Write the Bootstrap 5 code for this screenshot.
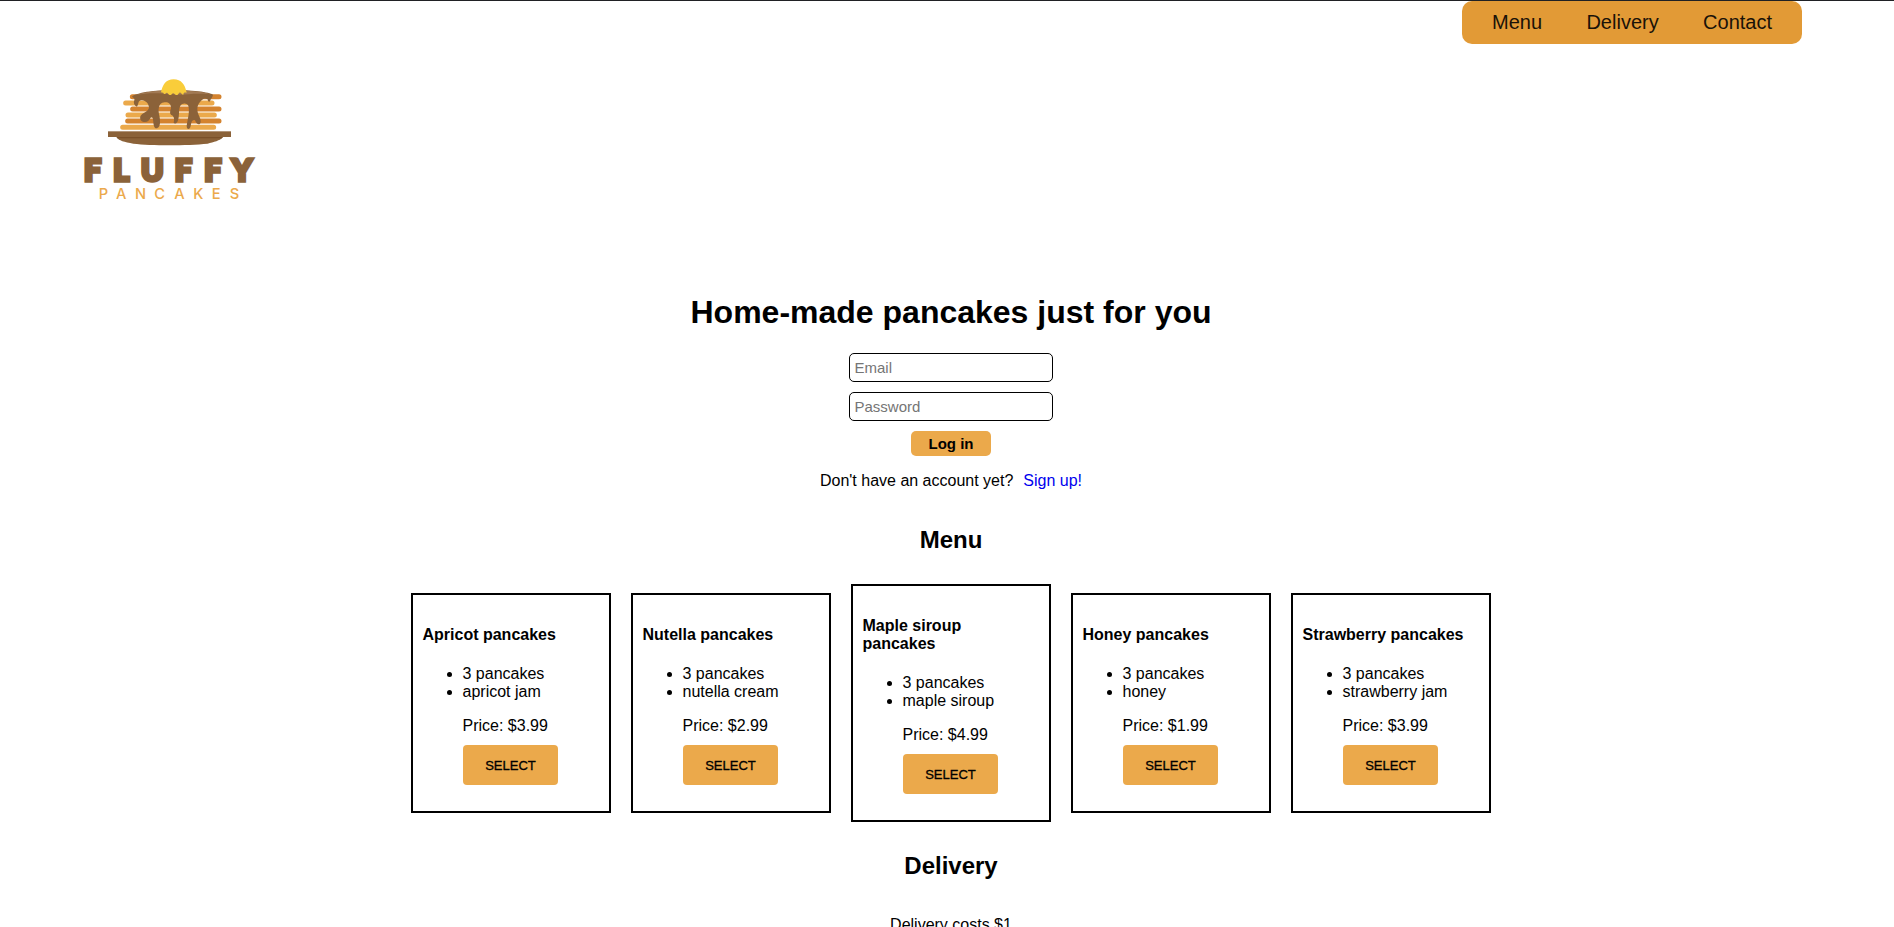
<!DOCTYPE html>
<html lang="en">
<head>
<meta charset="utf-8">
<meta name="viewport" content="width=device-width, initial-scale=1">
<title>Fluffy Pancakes</title>
<link href="https://cdn.jsdelivr.net/npm/bootstrap@5.3.0/dist/css/bootstrap.min.css" rel="stylesheet">
<style>
html{overflow:hidden}
body{font:16px/18px "Liberation Sans",Arial,sans-serif;color:#000;background:#fff;border-top:1px solid #202124;height:927px;overflow:hidden}
.site-nav{width:340px;height:43px;margin-right:92px;padding:0 30px;background:#e29a36;border-radius:10px;font-size:20px;line-height:43px}
.site-nav a{color:#1a1208;text-decoration:none}
.brand{margin:26px 0 0 70px;width:200px;height:140px}
.brand svg{display:block}
.word-top{font:900 91px Lato,sans-serif;fill:#8b6239;stroke:#8b6239;stroke-width:11px}
.word-sub{font:500 44px Inter,sans-serif;fill:#eba94b}
.page{padding-left:8px}
h1{font-size:32px;font-weight:700;line-height:37px;margin:84px 0 22px}
h2{font-size:24px;font-weight:700;line-height:27px;margin:0}
#menu{margin:36px 0 31px}
#delivery{margin:30px 0 37px}
.field{width:204px;height:29px;padding:5px 4.500px;border:1px solid #000;border-radius:5px;font-size:15px;line-height:17px;margin-bottom:10px;color:#000}
.field::placeholder{color:#757575;opacity:1}
.login{height:25px;width:80px;border:0;border-radius:5px;background:#eba94b;font-size:15px;line-height:17px;font-weight:700}
.ask{margin:16px 0 0}
.signup{color:#00e;text-decoration:none;margin-left:10px}
.menu-row{gap:20px}
.item{width:200px;border:2px solid #000;padding:10px 12px 10px 9.500px}
.item h3{font-size:16px;font-weight:700;line-height:18px;margin:21px 0}
.item ul{padding-left:40px;margin:0 0 16px}
.order{margin:0 0 16px 40px}
.pick{display:block;width:95px;height:40px;border:0;border-radius:4px;background:#eba94b;font-size:13px;line-height:16px;padding:2px 0 0;margin:10px 0 0 .5px;-webkit-text-stroke:.3px #000}
</style>
</head>
<body>
<header>
<nav class="site-nav ms-auto d-flex justify-content-between"><a href="#menu">Menu</a><a href="#delivery">Delivery</a><a href="#contact">Contact</a></nav>
<div class="brand">
<svg width="200" height="140" viewBox="0 0 600 420" role="img" aria-label="Fluffy Pancakes">
<!-- pancake stack -->
<g stroke-width="15" stroke-linecap="round">
<path stroke="#d4832f" d="M187 80H447M188 117H447M173 153H447"/>
<path stroke="#eba94b" d="M167 99H426M174 135H433M158 172H431"/>
</g>
<!-- chocolate sauce -->
<path fill="#8b6239" d="M186 80C192 72 236 60 310 60C375 60 427 68 429 75C427 84 422 86 421 91C420 98 413 96 413 88C402 82 398 88 392 94C385 101 382 108 382 118C382 133 392 142 392 155C391 167 380 165 375 151C367 148 364 155 362 168C360 180 350 180 350 168C353 146 360 126 355 107C350 98 337 98 331 107C325 119 329 131 325 147C323 158 317 163 311 159C313 150 314 139 304 135C298 131 301 122 303 115C304 101 294 96 284 97C273 98 267 104 266 116C264 129 271 139 270 157C270 178 253 181 251 164C249 151 250 140 243 142C238 151 232 158 221 156C209 153 207 140 216 133C228 125 236 122 237 112C236 101 228 92 216 91C203 90 207 102 201 110C194 109 189 98 193 91C195 84 189 83 186 80Z"/>
<path fill="#a27a54" d="M197 75C230 65 268 61 312 61C360 61 402 66 423 73C370 68 345 76 310 73C270 70 240 67 197 75Z"/>
<!-- butter -->
<path fill="#f9cd3a" d="M273 67C278 44 288 28 311 28C334 28 345 44 350 68C344 67 341 67 340 74C334 75 334 66 328 68C323 72 324 76 318 75C313 73 313 68 308 70C304 76 301 76 297 74C293 72 294 67 289 69C284 74 281 73 280 68Z"/>
<!-- plate -->
<path fill="#8b6239" d="M140 202H458C451 212 430 217 413 221C350 227 244 227 190 221C163 217 146 212 140 202Z"/>
<path fill="#7a5029" d="M138 200H460L456 205H143Z"/>
<rect x="114" y="184" width="369" height="17" fill="#8b6239"/>
<text class="word-top" x="42 130 213 314 403 486" y="333">FLUFFY</text>
<text class="word-sub" x="86 138 195 253 313 370 425 479" y="386">PANCAKES</text>
</svg>
</div>
</header>
<main class="page d-flex flex-column align-items-center">
<h1>Home-made pancakes just for you</h1>
<input class="field" type="email" placeholder="Email">
<input class="field" type="password" placeholder="Password">
<button class="login">Log in</button>
<p class="ask">Don't have an account yet?<a class="signup" href="#signup">Sign up!</a></p>
<h2 id="menu">Menu</h2>
<section class="menu-row d-flex align-items-center">
<article class="item"><h3>Apricot pancakes</h3><ul><li>3 pancakes</li><li>apricot jam</li></ul><div class="order">Price: $3.99<button class="pick">SELECT</button></div></article>
<article class="item"><h3>Nutella pancakes</h3><ul><li>3 pancakes</li><li>nutella cream</li></ul><div class="order">Price: $2.99<button class="pick">SELECT</button></div></article>
<article class="item"><h3>Maple siroup pancakes</h3><ul><li>3 pancakes</li><li>maple siroup</li></ul><div class="order">Price: $4.99<button class="pick">SELECT</button></div></article>
<article class="item"><h3>Honey pancakes</h3><ul><li>3 pancakes</li><li>honey</li></ul><div class="order">Price: $1.99<button class="pick">SELECT</button></div></article>
<article class="item"><h3>Strawberry pancakes</h3><ul><li>3 pancakes</li><li>strawberry jam</li></ul><div class="order">Price: $3.99<button class="pick">SELECT</button></div></article>
</section>
<h2 id="delivery">Delivery</h2>
<p class="mb-0">Delivery costs $1</p>
</main>
<script src="https://cdn.jsdelivr.net/npm/bootstrap@5.3.0/dist/js/bootstrap.bundle.min.js"></script>
</body>
</html>
